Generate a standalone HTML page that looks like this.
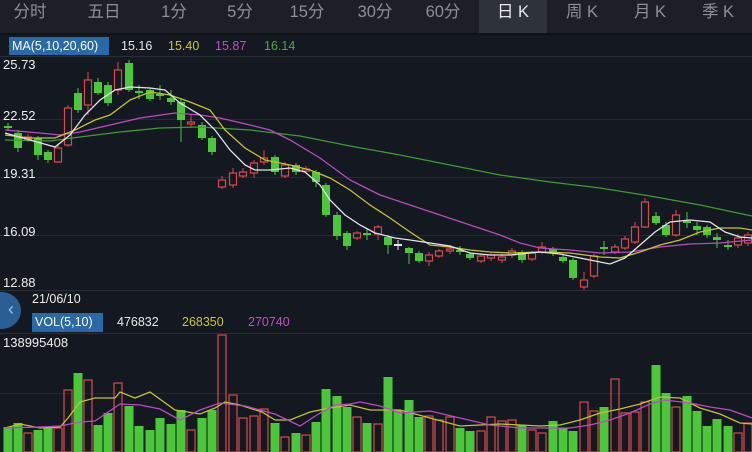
<!DOCTYPE html>
<html><head><meta charset="utf-8"><style>
*{margin:0;padding:0;box-sizing:border-box}
body{width:752px;height:452px;overflow:hidden;background:#141821;font-family:"Liberation Sans","Noto Sans CJK SC",sans-serif;position:relative}
.tabs{position:absolute;left:0;top:0;width:752px;height:33px;background:#1c1f26}
.tab{position:absolute;top:0;height:33px;line-height:24px;font-size:16.5px;color:#8c9099;transform:translateX(-50%);white-space:nowrap}
.act{position:absolute;left:479px;top:0;width:68px;height:33px;background:#2e323b}
.t{position:absolute;font-size:12.5px;white-space:nowrap}
.lbl{position:absolute;background:#2a69a6;color:#fff;font-size:12.5px;padding:0 3px;white-space:nowrap}
svg{position:absolute;left:0;top:0}
</style></head><body>
<div class="tabs"><div class="act"></div>
<div class="tab" style="left:30px">分时</div>
<div class="tab" style="left:104px">五日</div>
<div class="tab" style="left:174px">1分</div>
<div class="tab" style="left:240px">5分</div>
<div class="tab" style="left:307px">15分</div>
<div class="tab" style="left:375px">30分</div>
<div class="tab" style="left:443px">60分</div>
<div class="tab" style="left:513px;color:#e6e8ec">日 K</div>
<div class="tab" style="left:582px">周 K</div>
<div class="tab" style="left:650px">月 K</div>
<div class="tab" style="left:718px">季 K</div>
</div>
<svg id="s" width="752" height="452"></svg>
<div class="lbl" style="left:9px;top:37px;height:18px;line-height:18px;width:100px">MA(5,10,20,60)</div>
<div class="t" style="left:121px;top:39px;color:#e8e8e8">15.16</div>
<div class="t" style="left:168px;top:39px;color:#c9c82e">15.40</div>
<div class="t" style="left:215px;top:39px;color:#c04fc4">15.87</div>
<div class="t" style="left:264px;top:39px;color:#4caa3e">16.14</div>
<div class="t" style="left:3px;top:57px;color:#eee;font-size:13px">25.73</div>
<div class="t" style="left:3px;top:108px;color:#eee;font-size:13px">22.52</div>
<div class="t" style="left:3px;top:166px;color:#eee;font-size:13px">19.31</div>
<div class="t" style="left:3px;top:224px;color:#eee;font-size:13px">16.09</div>
<div class="t" style="left:3px;top:275px;color:#eee;font-size:13px">12.88</div>
<div style="position:absolute;left:-18px;top:292px;width:39px;height:37px;border-radius:50%;background:#2a5f96"></div>
<div class="t" style="left:8px;top:299px;color:#9cc0e6;font-size:18px">‹</div>
<div class="t" style="left:32px;top:292px;color:#eee">21/06/10</div>
<div class="lbl" style="left:32px;top:313px;height:19px;line-height:19px;width:71px">VOL(5,10)</div>
<div class="t" style="left:117px;top:315px;color:#e8e8e8">476832</div>
<div class="t" style="left:182px;top:315px;color:#c9c82e">268350</div>
<div class="t" style="left:248px;top:315px;color:#c04fc4">270740</div>
<div class="t" style="left:3px;top:335px;color:#eee;font-size:13px">138995408</div>
<script>
var s=document.getElementById('s'),h='';
h+='<line x1="0" y1="34" x2="752" y2="34" stroke="#0f1217" stroke-width="2"/>';
h+='<line x1="0" y1="56.5" x2="752" y2="56.5" stroke="#2a2e36"/>';
[119.5,177.5,235.5].forEach(function(y){h+='<line x1="0" y1="'+y+'" x2="752" y2="'+y+'" stroke="#262a33"/>';});
h+='<line x1="0" y1="290.5" x2="752" y2="290.5" stroke="#2a2e36"/>';
h+='<line x1="0" y1="333.5" x2="752" y2="333.5" stroke="#2a2e36"/>';
h+='<line x1="0" y1="393.5" x2="752" y2="393.5" stroke="#242831"/>';
var C=[[8,126,128,'g',123,131],[18,133,148,'g',130,152],[28,137,139,'r',134,142],[38,138,155,'g',136,160],[48,152,160,'g',150,163],[58,148,162,'r',145,163],[68,108,145,'r',105,147],[78,93,110,'g',88,113],[88,80,105,'r',72,115],[98,82,93,'g',78,95],[108,85,103,'g',82,106],[118,70,90,'r',62,95],[129,63,90,'g',60,92],[139,91,93,'g',85,99],[150,90,99,'g',88,101],[160,94,96,'g',85,100],[171,98,102,'g',90,105],[181,102,120,'g',98,142],[191,122,124,'r',115,127],[202,125,138,'g',122,140],[212,138,152,'g',136,155],[222,180,187,'r',176,189],[233,173,185,'r',168,188],[243,172,176,'r',168,178],[254,163,173,'r',160,178],[264,158,162,'r',150,165],[275,157,172,'g',155,175],[285,165,176,'r',162,178],[296,165,172,'g',163,175],[306,169,171,'r',166,174],[316,172,182,'g',170,187],[326,185,215,'g',183,217],[337,215,236,'g',212,240],[347,233,246,'g',231,250],[357,233,238,'r',231,240],[367,233,235,'g',228,240],[378,227,234,'r',225,240],[388,237,245,'g',235,254],[398,244,246,'w',240,250],[409,248,253,'g',247,264],[419,253,261,'g',251,263],[429,255,261,'r',252,266],[439,251,256,'r',249,258],[450,249,251,'r',245,254],[460,250,252,'g',246,255],[470,254,258,'g',252,260],[481,256,261,'r',254,263],[491,255,258,'r',252,261],[502,257,260,'r',254,263],[512,251,255,'r',248,258],[522,252,260,'g',250,263],[532,253,259,'r',251,261],[542,247,252,'r',242,254],[553,249,253,'g',247,256],[563,257,261,'g',255,263],[573,260,278,'g',258,280],[584,280,287,'r',272,290],[594,256,276,'r',254,278],[604,247,249,'g',241,255],[615,247,252,'r',244,254],[625,239,248,'r',236,250],[635,227,242,'r',222,244],[645,202,227,'r',198,228],[656,216,223,'g',212,225],[666,225,235,'g',222,237],[676,215,235,'r',210,237],[687,221,223,'g',212,228],[697,226,230,'g',222,235],[707,227,235,'g',225,238],[717,237,240,'g',233,248],[728,245,247,'g',240,250],[738,238,245,'r',234,248],[748,235,243,'r',232,246]];
var col={g:'#4cc73c',r:'#d84a4a',w:'#e6e6e6'};
C.forEach(function(c){var x=c[0],k=col[c[3]];
h+='<line x1="'+x+'" y1="'+c[4]+'" x2="'+x+'" y2="'+c[5]+'" stroke="'+k+'"/>';
var ht=Math.max(c[2]-c[1],1.5);
if(c[3]=='r')h+='<rect x="'+(x-3.5)+'" y="'+c[1]+'" width="7" height="'+ht+'" fill="#141821" stroke="'+k+'" stroke-width="1.2"/>';
else h+='<rect x="'+(x-4)+'" y="'+c[1]+'" width="8" height="'+ht+'" fill="'+k+'"/>';});
function pl(p,c){h+='<polyline fill="none" stroke="'+c+'" stroke-width="1.3" points="'+p+'"/>';}
pl('5,140 50,141 80,137 120,132 160,128 200,127 250,130 300,136 350,146 400,155 450,165 500,175 550,182 600,188 650,196 700,205 752,216','#3f9a35');
pl('5,130 40,133 60,135 80,132 110,125 140,118 175,113 200,115 220,118 250,125 270,130 290,140 320,158 350,180 380,195 410,205 440,215 470,225 500,235 520,243 540,248 570,250 600,253 630,252 660,247 690,244 720,243 752,240','#b84cbf');
pl('5,135 30,138 55,138 75,130 95,120 110,115 130,100 150,92 170,95 190,102 210,110 225,130 245,148 265,160 290,165 310,170 330,178 350,190 370,205 390,218 410,232 430,245 450,247 470,250 490,252 510,253 540,252 570,253 600,257 620,258 640,252 660,245 680,240 700,232 720,228 740,228 752,230','#c4c130');
pl('5,133 30,140 55,147 70,135 85,115 100,100 115,90 130,87 150,88 165,90 180,103 200,115 215,130 230,150 245,165 255,170 270,170 290,168 305,172 320,185 330,200 345,215 360,225 375,233 395,238 410,240 430,243 450,246 470,253 490,255 510,255 540,252 560,254 580,258 600,262 610,264 625,258 640,245 655,232 670,222 690,220 710,222 725,232 740,237 752,238','#e4e4ea');
var V=[427,423,433,430,428,428,390,373,380,425,413,383,406,426,430,418,424,410,430,418,410,335,395,418,416,409,423,437,433,435,422,389,396,407,417,423,424,377,410,400,417,416,420,417,428,431,431,417,421,420,425,430,433,421,428,431,402,411,407,379,413,412,402,365,393,407,396,411,426,419,426,433,423];
C.forEach(function(c,i){var x=c[0],y=V[i],k=col[c[3]=='w'?'g':c[3]];
if(c[3]=='r')h+='<rect x="'+(x-4)+'" y="'+y+'" width="8" height="'+(452-y)+'" fill="none" stroke="'+k+'" stroke-width="1.2"/>';
else h+='<rect x="'+(x-4.5)+'" y="'+y+'" width="9" height="'+(452-y)+'" fill="'+k+'"/>';});
pl('5,428 20,424 40,428 60,427 68,418 80,402 95,398 115,398 120,392 135,398 150,392 175,410 200,414 215,408 225,402 240,405 262,412 275,420 290,420 310,412 330,408 350,405 370,410 400,410 430,418 460,426 500,424 540,426 560,425 580,420 600,413 620,409 640,404 660,397 680,398 700,408 720,414 740,423 752,424','#c4c130');
pl('5,428 40,427 60,426 80,422 95,421 120,404 140,405 160,409 180,420 200,410 220,403 245,406 260,410 275,414 300,426 320,413 335,405 350,404 360,402 380,406 400,413 430,411 460,418 490,425 520,428 550,428 570,428 590,425 610,420 630,413 650,404 665,400 690,403 710,407 730,410 752,418','#b84cbf');
s.innerHTML=h;
</script>
</body></html>
